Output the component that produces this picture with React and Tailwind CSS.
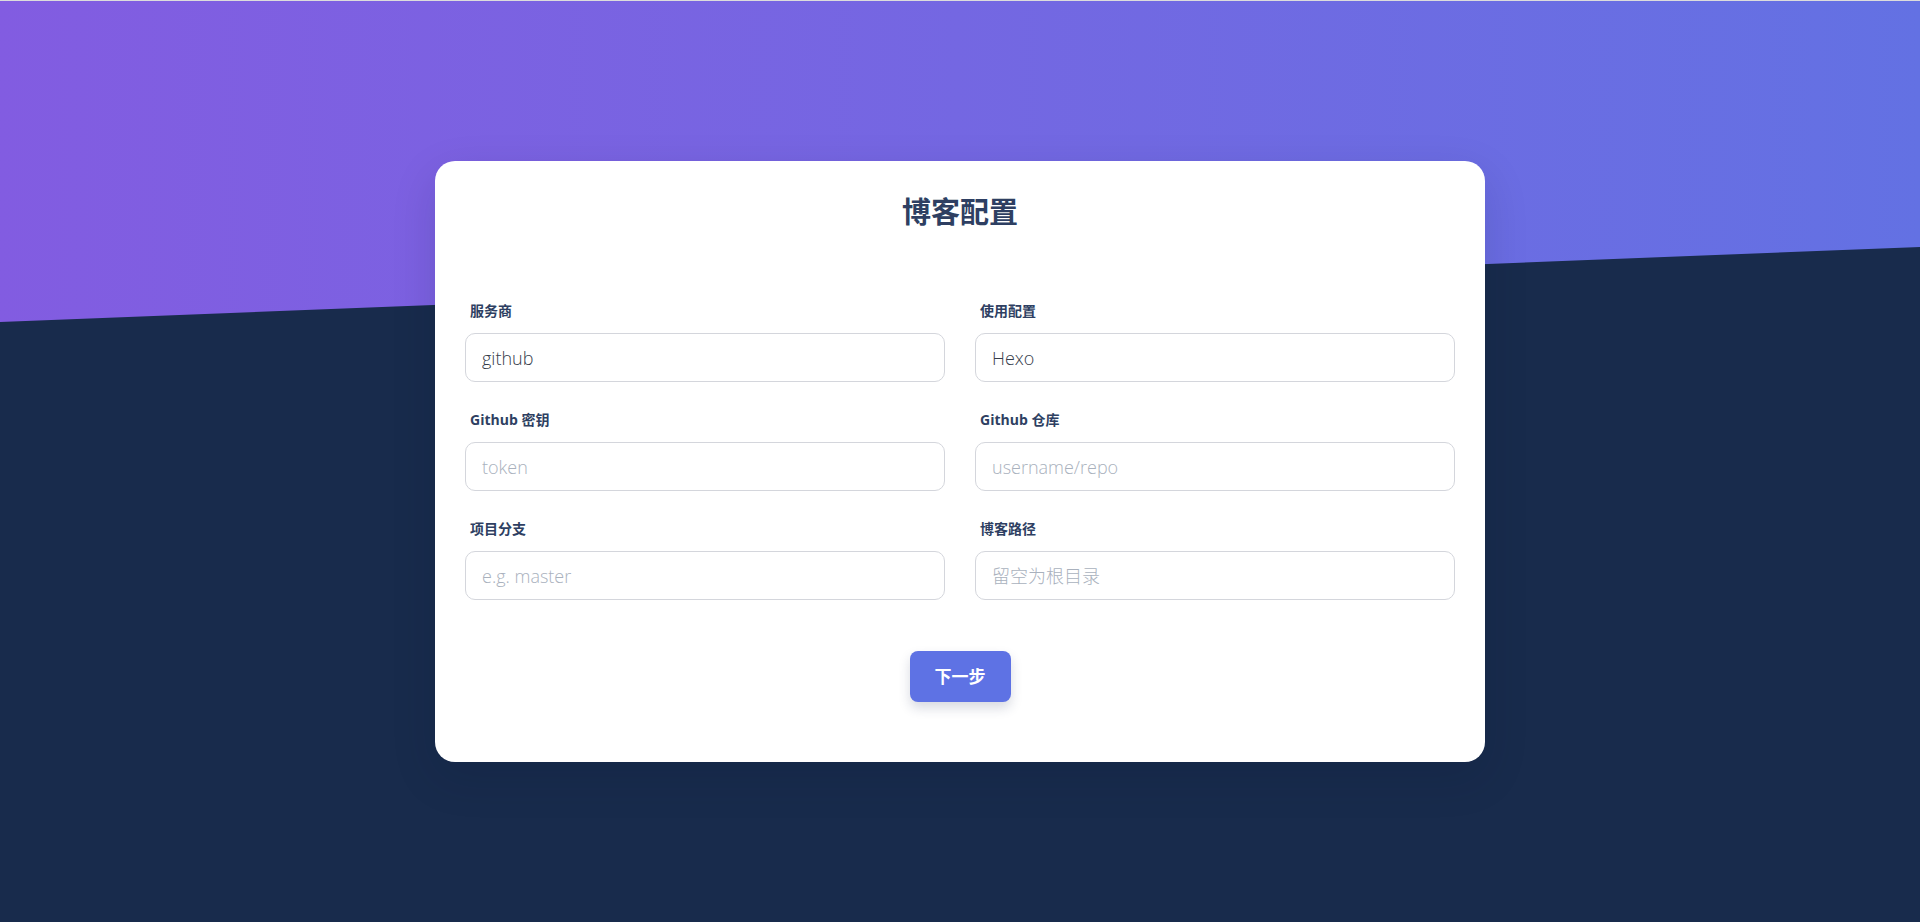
import React, { useState } from 'react';

const fields = [
  { name: 'provider', label: '服务商', value: 'github', placeholder: '' },
  { name: 'preset', label: '使用配置', value: 'Hexo', placeholder: '' },
  { name: 'token', label: 'Github 密钥', value: '', placeholder: 'token' },
  { name: 'repo', label: 'Github 仓库', value: '', placeholder: 'username/repo' },
  { name: 'branch', label: '项目分支', value: '', placeholder: 'e.g. master' },
  { name: 'path', label: '博客路径', value: '', placeholder: '留空为根目录' },
];

const App = () => {
  const [values, setValues] = useState(
    fields.reduce((acc, f) => ({ ...acc, [f.name]: f.value }), {})
  );

  const handleChange = (e) => {
    setValues({ ...values, [e.target.name]: e.target.value });
  };

  return (
    <div className="relative min-h-screen bg-[#182b4c] border-t border-[#dcdcdc] font-['Open_Sans','Noto_Sans_CJK_SC',sans-serif] overflow-hidden">
      {/* purple header band */}
      <div className="absolute inset-x-0 top-0 h-[322px] bg-gradient-to-r from-[#825ce1] to-[#6371e3] [clip-path:polygon(0_0,100%_0,100%_246px,0_321px)]" />

      <div className="relative flex justify-center pt-[160px] pb-[160px]">
        <div className="w-[1050px] bg-white rounded-[20px] px-[30px] pt-[30px] pb-[60px] shadow-[0_15px_45px_rgba(10,20,50,0.14)]">
          <h1 className="text-center text-[29px] leading-[42px] font-bold text-[#2e3f62] mb-[68px]">
            博客配置
          </h1>

          <form onSubmit={(e) => e.preventDefault()}>
            <div className="grid grid-cols-2 gap-x-[30px] gap-y-[28px]">
              {fields.map((f) => (
                <div key={f.name}>
                  <label className="block h-[20px] leading-[20px] pl-[5px] mb-[12px] text-[14px] font-bold text-[#2e3f62]">
                    {f.label}
                  </label>
                  <input
                    type="text"
                    name={f.name}
                    value={values[f.name]}
                    placeholder={f.placeholder}
                    onChange={handleChange}
                    className="w-full h-[49px] px-[16px] text-[18px] font-light text-[#353c4a] placeholder:text-[#a9b1bd] border border-[#d4d6dc] rounded-[10px] outline-none bg-white"
                  />
                </div>
              ))}
            </div>

            <div className="flex justify-center mt-[51px]">
              <button
                type="submit"
                className="h-[51px] px-[25px] rounded-[8px] bg-[#5e72e4] text-white text-[17px] font-bold shadow-[0_6px_12px_rgba(40,50,90,0.18)]"
              >
                下一步
              </button>
            </div>
          </form>
        </div>
      </div>
    </div>
  );
};

export default App;
